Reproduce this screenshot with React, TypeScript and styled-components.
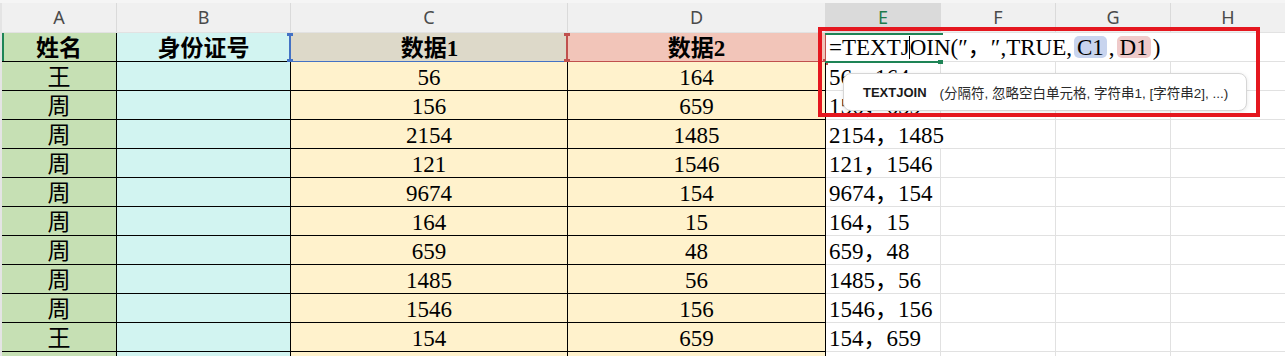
import React from 'react';
import styled, { createGlobalStyle } from 'styled-components';

const Global = createGlobalStyle`
  html, body { margin: 0; padding: 0; background: #ffffff; }
  body { width: 1285px; height: 356px; overflow: hidden; }
`;

const TEMPLATE = '2px 115px 174px 277px 258px 115px 115px 115px 114px';

const BLUE = '#4472c4';
const RED = '#c0504d';
const GREEN = '#1e8456';
const GRID = '#e1e1e1';
const BLACK = '#000000';

const Sheet = styled.div`
  position: relative;
  width: 1285px;
  height: 356px;
  overflow: hidden;
  display: flex;
  flex-direction: column;
  font-family: "Liberation Serif", "Noto Sans CJK SC", serif;
`;

const HeaderBar = styled.div`
  flex-shrink: 0;
  display: grid;
  grid-template-columns: ${TEMPLATE};
  height: 33px;
  box-sizing: border-box;
  padding-top: 3px;
  background: #f5f5f5;
  border-bottom: 1px solid #e2e2e2;
`;

const ColHead = styled.div<{ $active?: boolean; $last?: boolean }>`
  display: flex;
  align-items: center;
  justify-content: center;
  box-sizing: border-box;
  background: ${(p) => (p.$active ? '#dadada' : '#f0f0f0')};
  border-right: ${(p) => (p.$last ? 'none' : '1px solid #dadada')};
  font-family: "Noto Sans", "Open Sans", sans-serif;
  font-size: 18px;
  color: ${(p) => (p.$active ? '#1d7a4c' : '#4a4a4a')};
  padding-bottom: 1px;
`;

const Row = styled.div`
  flex-shrink: 0;
  display: grid;
  grid-template-columns: ${TEMPLATE};
  height: 29px;
`;

const Gutter = styled.div`
  background: #e4e4e4;
`;

const Cell = styled.div<{
  $bg?: string;
  $right?: string;
  $bottom?: string;
  $align?: 'center' | 'left';
  $bold?: boolean;
  $rowMark?: boolean;
  $top?: boolean;
}>`
  position: relative;
  z-index: ${(p) => (p.$top ? 2 : 'auto')};
  display: flex;
  align-items: center;
  justify-content: ${(p) => (p.$align === 'left' ? 'flex-start' : 'center')};
  box-sizing: border-box;
  padding-left: ${(p) => (p.$align === 'left' ? '3px' : '0')};
  padding-top: 2px;
  background: ${(p) => p.$bg || 'transparent'};
  border-right: ${(p) => (p.$right ? `1px solid ${p.$right}` : 'none')};
  border-bottom: 1px solid ${(p) => p.$bottom || GRID};
  box-shadow: ${(p) => (p.$rowMark ? `inset 2px 0 0 ${GREEN}` : 'none')};
  font-size: 23px;
  font-weight: ${(p) => (p.$bold ? 700 : 400)};
  color: #000;
  white-space: nowrap;
  overflow: visible;
  line-height: 1;
`;

const Mark = styled.span<{ $c: string }>`
  position: absolute;
  background: ${(p) => p.$c};
`;

const Ref = styled.span<{ $bg: string }>`
  display: inline-flex;
  align-items: center;
  height: 22px;
  padding: 0 3px;
  margin: 0 2px;
  border-radius: 5px;
  background: ${(p) => p.$bg};
`;

const Caret = styled.span`
  display: inline-block;
  width: 1px;
  height: 23px;
  background: #000;
  margin: 0 -0.5px;
  vertical-align: middle;
`;

const Formula = styled.span`
  display: inline-flex;
  align-items: center;
  white-space: nowrap;
  margin-top: -2px;
`;

const Tooltip = styled.div`
  position: absolute;
  left: 843px;
  top: 73px;
  width: 404px;
  height: 38px;
  box-sizing: border-box;
  display: flex;
  align-items: center;
  gap: 13px;
  padding-left: 19px;
  background: #ffffff;
  border: 1px solid #d6d6d6;
  border-radius: 8px;
  box-shadow: 0 1px 4px rgba(0, 0, 0, 0.1);
  font-family: "Liberation Sans", "Noto Sans CJK SC", sans-serif;
  font-size: 13.5px;
  color: #2a2a2a;
  z-index: 5;
`;

const FnName = styled.span`
  font-weight: 700;
  font-size: 13px;
  color: #1a1a1a;
`;

const Highlight = styled.div`
  position: absolute;
  left: 818px;
  top: 27px;
  width: 442px;
  height: 90px;
  box-sizing: border-box;
  border: 4px solid #e5171f;
  z-index: 6;
  pointer-events: none;
`;

const names = ['王', '周', '周', '周', '周', '周', '周', '周', '周', '王'];
const cData = ['56', '156', '2154', '121', '9674', '164', '659', '1485', '1546', '154'];
const dData = ['164', '659', '1485', '1546', '154', '15', '48', '56', '156', '659'];

const GREEN_BG = '#c6e0b4';
const CYAN_BG = '#d2f4f1';
const YELLOW_BG = '#fff2cc';

const letters = ['A', 'B', 'C', 'D', 'E', 'F', 'G', 'H'];

function SelectionMarks({ color, rightEdge }: { color: string; rightEdge?: boolean }) {
  return (
    <>
      <Mark $c={color} style={{ left: -2, top: 0, width: 2, bottom: -1 }} />
      <Mark $c={color} style={{ left: -2, right: rightEdge ? -1 : 0, bottom: -2, height: 2 }} />
      <Mark $c={color} style={{ left: -4, top: 0, width: 6, height: 3 }} />
      <Mark $c={color} style={{ left: -4, bottom: -4, width: 6, height: 6 }} />
    </>
  );
}

export default function App() {
  return (
    <>
      <Global />
      <Sheet>
        <HeaderBar>
          <Gutter />
          {letters.map((l, i) => (
            <ColHead key={l} $active={l === 'E'} $last={i === letters.length - 1}>
              {l}
            </ColHead>
          ))}
        </HeaderBar>

        <Row>
          <Gutter />
          <Cell $bg={GREEN_BG} $right={BLACK} $bottom={BLACK} $bold $rowMark>
            姓名
          </Cell>
          <Cell $bg={CYAN_BG} $right={BLACK} $bottom={BLACK} $bold>
            身份证号
          </Cell>
          <Cell $bg="#ddd9c9" $bottom={BLACK} $bold>
            数据1
            <SelectionMarks color={BLUE} />
          </Cell>
          <Cell $bg="#f2c5b9" $right={RED} $bottom={BLACK} $bold>
            数据2
            <SelectionMarks color={RED} rightEdge />
            <Mark $c={RED} style={{ right: -3, bottom: -4, width: 5, height: 6 }} />
          </Cell>
          <Cell $bg="#ffffff" $align="left" $top>
            <Formula>
              =TEXTJ
              <Caret />
              OIN(″，″,TRUE,
              <Ref $bg="#c8d4ee">C1</Ref>,
              <Ref $bg="#efcaca">D1</Ref>)
            </Formula>
            <Mark $c={GREEN} style={{ left: -1, right: -2, top: 0, height: 2 }} />
            <Mark $c={GREEN} style={{ left: -1, right: -2, bottom: -2, height: 2 }} />
            <Mark $c={GREEN} style={{ right: -2, bottom: -3, width: 5, height: 4 }} />
          </Cell>
          <Cell />
          <Cell />
          <Cell />
        </Row>

        {names.map((n, i) => {
          const text = `${cData[i]}，${dData[i]}`;
          const overflow = cData[i].length + dData[i].length >= 8;
          return (
            <Row key={i}>
              <Gutter />
              <Cell $bg={GREEN_BG} $right={BLACK} $bottom={BLACK}>
                {n}
              </Cell>
              <Cell $bg={CYAN_BG} $right={BLACK} $bottom={BLACK} />
              <Cell $bg={YELLOW_BG} $right={BLACK} $bottom={BLACK}>
                {cData[i]}
              </Cell>
              <Cell $bg={YELLOW_BG} $right={BLACK} $bottom={BLACK}>
                {dData[i]}
              </Cell>
              <Cell $align="left" $right={overflow ? undefined : GRID} $top={overflow}>
                {text}
              </Cell>
              <Cell $right={GRID} />
              <Cell $right={GRID} />
              <Cell />
            </Row>
          );
        })}

        <Row>
          <Gutter />
          <Cell $bg={GREEN_BG} $right={BLACK} $bottom={BLACK} />
          <Cell $bg={CYAN_BG} $right={BLACK} $bottom={BLACK} />
          <Cell $bg={YELLOW_BG} $right={BLACK} $bottom={BLACK} />
          <Cell $bg={YELLOW_BG} $right={BLACK} $bottom={BLACK} />
          <Cell $right={GRID} />
          <Cell $right={GRID} />
          <Cell $right={GRID} />
          <Cell />
        </Row>

        <Tooltip>
          <FnName>TEXTJOIN</FnName>
          <span>(分隔符, 忽略空白单元格, 字符串1, [字符串2], ...)</span>
        </Tooltip>
        <Highlight />
      </Sheet>
    </>
  );
}
